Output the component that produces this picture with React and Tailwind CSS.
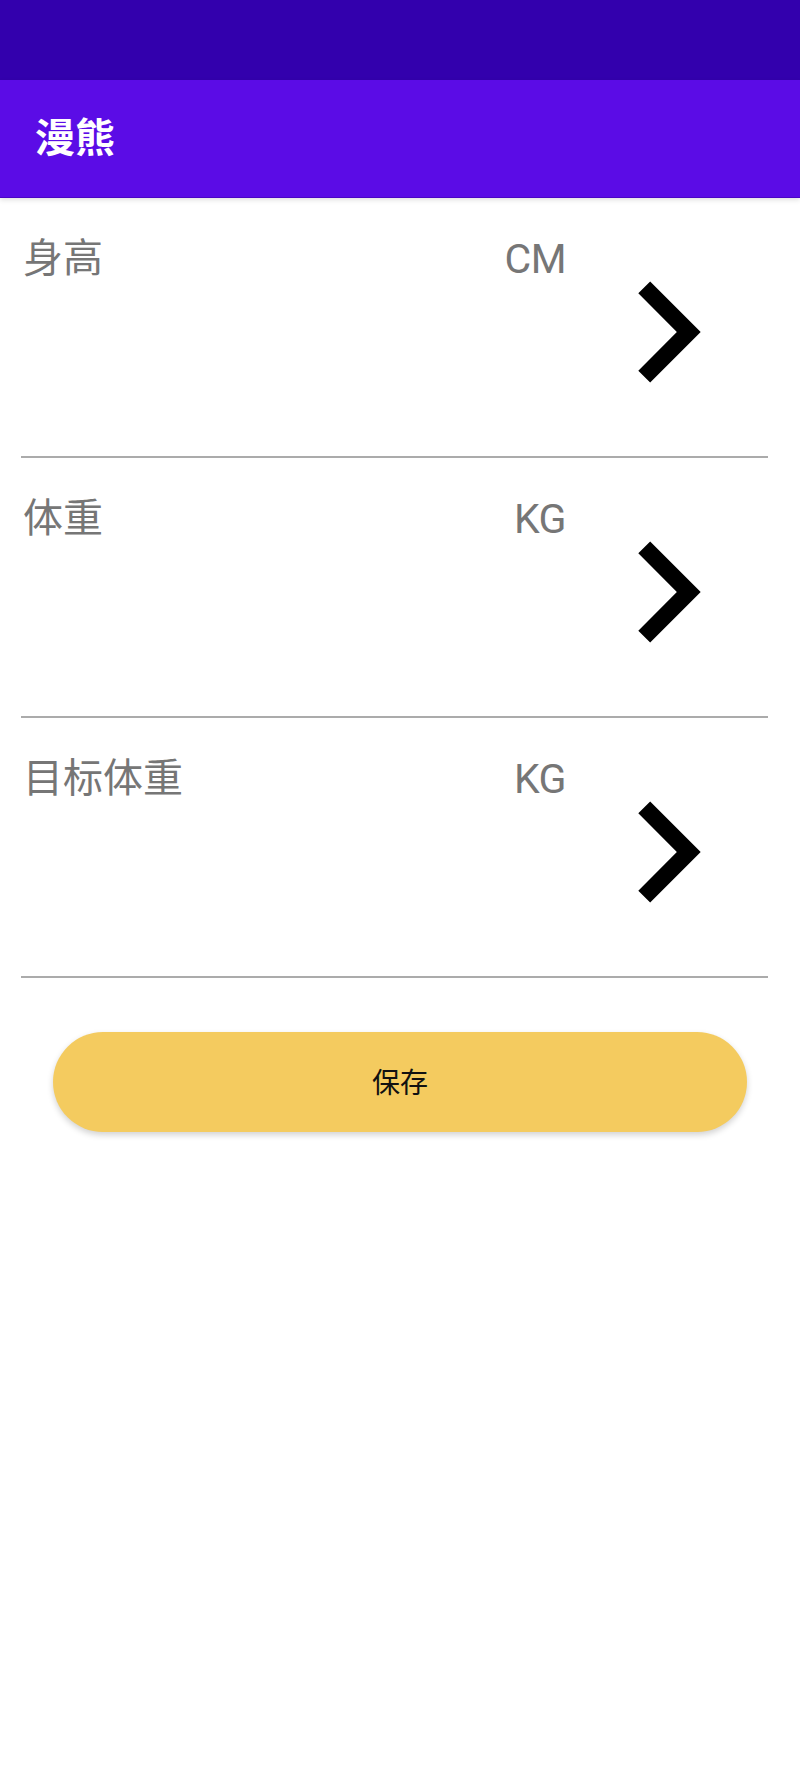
const ROWS = [
  { label: '身高', unit: 'CM' },
  { label: '体重', unit: 'KG' },
  { label: '目标体重', unit: 'KG' },
];

function Chevron() {
  return (
    <svg viewBox="0 0 24 24" className="w-[202px] h-[202px] mt-[33px] shrink-0" fill="#000">
      <path d="M10 6L8.59 7.41 13.17 12l-4.58 4.59L10 18l6-6z" />
    </svg>
  );
}

export default function App() {
  return (
    <div className="min-h-[1766px] bg-white font-['Roboto','Noto_Sans_CJK_SC',sans-serif]">
      <div className="h-[80px] bg-[#3300ad]" />
      <div className="relative h-[118px] bg-[#5b0ce6] flex items-center pl-[35px] border-b border-[#4a06c4] shadow-[0_2px_5px_rgba(0,0,0,0.12)]">
        <h1 className="text-[40px] leading-none font-bold text-white">漫熊</h1>
      </div>

      <div className="ml-[21px] mr-[32px]">
        {ROWS.map((r) => (
          <div key={r.label} className="flex items-start h-[260px] border-b-2 border-[#ababab]">
            <div className="flex-1 pl-[2px] pt-[41px] text-[40px] leading-none text-[#767676]">{r.label}</div>
            <div className="pt-[41px] text-[41px] leading-none text-[#767676] text-right tracking-[-0.5px]">{r.unit}</div>
            <Chevron />
          </div>
        ))}
      </div>

      <button className="ml-[53px] mt-[54px] w-[694px] h-[100px] pt-[4px] rounded-full bg-[#f4cb5f] shadow-[0_3px_6px_rgba(0,0,0,0.18)] text-[28px] leading-none text-[#111]">
        保存
      </button>
    </div>
  );
}
